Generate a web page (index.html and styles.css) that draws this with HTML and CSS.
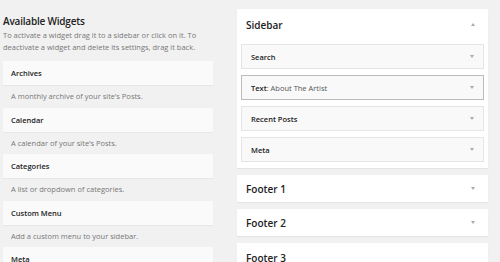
FILE: index.html
```html
<!doctype html>
<html lang="en">
  <head>
    <meta charset="UTF-8" />
    <meta name="viewport" content="width=device-width, initial-scale=1.0" />
    <title>Widgets</title>
    <link rel="stylesheet" href="styles.css">
  </head>
  <body>
    <div class="widgets-page">
      <div class="available">
        <h2 class="available-title">Available Widgets</h2>
        <p class="available-desc">
          To activate a widget drag it to a sidebar or click on it. To
          deactivate a widget and delete its settings, drag it back.
        </p>

        <div class="widget-item">
          <div class="widget-top">Archives</div>
          <div class="widget-desc">A monthly archive of your site’s Posts.</div>
        </div>
        <div class="widget-item">
          <div class="widget-top">Calendar</div>
          <div class="widget-desc">A calendar of your site’s Posts.</div>
        </div>
        <div class="widget-item">
          <div class="widget-top">Categories</div>
          <div class="widget-desc">A list or dropdown of categories.</div>
        </div>
        <div class="widget-item">
          <div class="widget-top">Custom Menu</div>
          <div class="widget-desc">Add a custom menu to your sidebar.</div>
        </div>
        <div class="widget-item">
          <div class="widget-top">Meta</div>
        </div>
      </div>

      <div class="sidebars">
        <div class="sidebar-panel open">
          <div class="panel-head">
            <h3>Sidebar</h3>
            <span class="arrow up"></span>
          </div>
          <div class="sidebar-widget">
            <span>Search</span>
            <span class="arrow"></span>
          </div>
          <div class="sidebar-widget active">
            <span>Text<span class="in-widget">: About The Artist</span></span>
            <span class="arrow"></span>
          </div>
          <div class="sidebar-widget">
            <span>Recent Posts</span>
            <span class="arrow"></span>
          </div>
          <div class="sidebar-widget">
            <span>Meta</span>
            <span class="arrow"></span>
          </div>
        </div>

        <div class="sidebar-panel">
          <div class="panel-head">
            <h3>Footer 1</h3>
            <span class="arrow"></span>
          </div>
        </div>
        <div class="sidebar-panel">
          <div class="panel-head">
            <h3>Footer 2</h3>
            <span class="arrow"></span>
          </div>
        </div>
        <div class="sidebar-panel last">
          <div class="panel-head">
            <h3>Footer 3</h3>
            <span class="arrow"></span>
          </div>
        </div>
      </div>
    </div>
  </body>
</html>
```

FILE: styles.css
```css
* {
  box-sizing: border-box;
  margin: 0;
  padding: 0;
  font-family: "Open Sans", "Liberation Sans", sans-serif;
}

body {
  background-color: #f1f1f1;
  color: #222;
  height: 262px;
  overflow: hidden;
}

.widgets-page {
  display: flex;
  align-items: flex-start;
  padding: 0 12px 0 3px;
  gap: 24px;
}

/* Available widgets column */
.available {
  width: 210px;
  flex-shrink: 0;
}

.available-title {
  font-size: 10px;
  font-weight: 600;
  letter-spacing: -0.2px;
  line-height: 14px;
  margin-top: 14px;
  color: #222;
}

.available-desc {
  font-size: 7.5px;
  line-height: 12px;
  color: #777;
  margin-top: 1px;
  margin-bottom: 8px;
}

.widget-top {
  height: 24px;
  line-height: 24px;
  padding-left: 8px;
  background-color: #fafafa;
  box-shadow: 0 1px 1px rgba(0, 0, 0, 0.04);
  font-size: 7.5px;
  font-weight: 600;
  color: #222;
}

.widget-desc {
  height: 22.5px;
  line-height: 23px;
  padding-left: 8px;
  font-size: 7.5px;
  color: #777;
}

/* Sidebars column */
.sidebars {
  width: 251px;
  flex-shrink: 0;
  display: flex;
  flex-direction: column;
  gap: 7px;
  padding-top: 9px;
}

.sidebar-panel {
  background-color: #fff;
  box-shadow: 0 1px 1px rgba(0, 0, 0, 0.05);
}

.sidebar-panel.open {
  padding: 0 4px 6px;
}

.panel-head {
  display: flex;
  justify-content: space-between;
  align-items: center;
  height: 27px;
  padding: 0 13px 0 9px;
}

.sidebar-panel.last .panel-head {
  height: 22px;
  align-items: flex-end;
}

.open .panel-head {
  height: 35px;
  padding: 2px 9px 6px 5px;
}

.panel-head h3 {
  font-size: 10px;
  font-weight: 600;
  line-height: 14px;
  color: #222;
}

.sidebar-widget {
  display: flex;
  justify-content: space-between;
  align-items: center;
  height: 25px;
  padding: 0 9px 0 9px;
  background-color: #f9f9f9;
  border: 1px solid #e5e5e5;
  font-size: 7.5px;
  font-weight: 600;
  color: #222;
}

.sidebar-widget + .sidebar-widget {
  margin-top: 6px;
}

.sidebar-widget.active {
  border-color: #bbb;
}

.in-widget {
  font-weight: 400;
  color: #555;
}

.arrow {
  width: 0;
  height: 0;
  border-left: 2.5px solid transparent;
  border-right: 2.5px solid transparent;
  border-top: 3px solid #aaa;
}

.arrow.up {
  border-top: none;
  border-bottom: 3px solid #aaa;
}
```
